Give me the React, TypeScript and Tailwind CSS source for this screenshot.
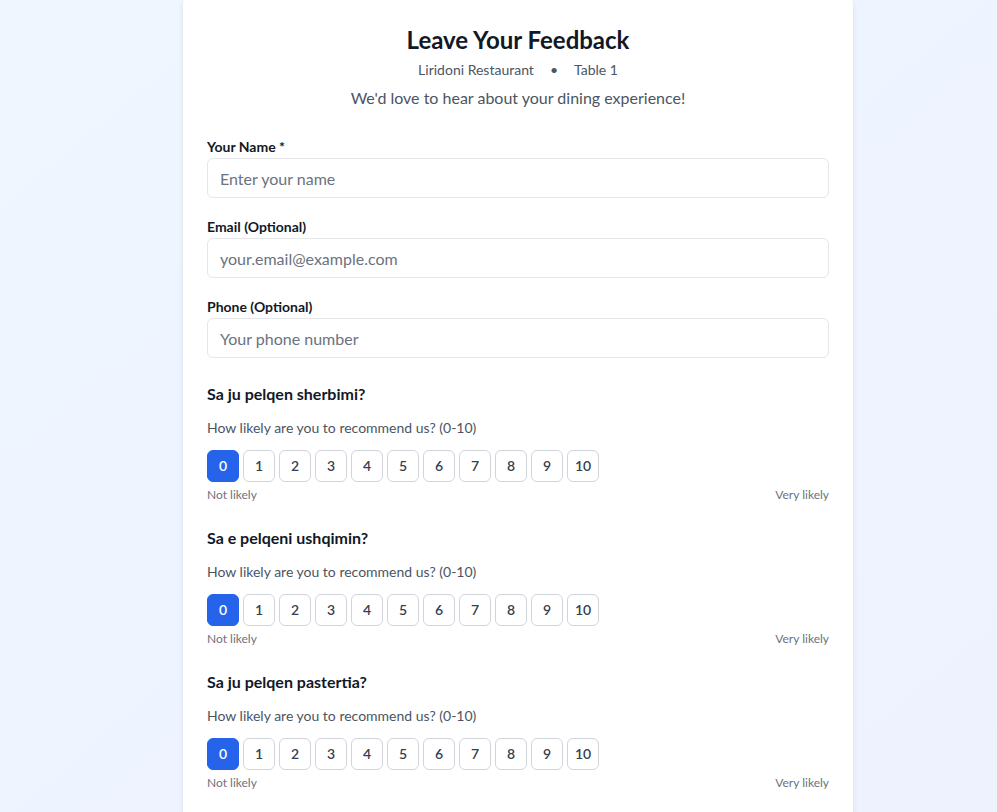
import React, { useState } from "react";

const questions = [
  "Sa ju pelqen sherbimi?",
  "Sa e pelqeni ushqimin?",
  "Sa ju pelqen pastertia?",
];

function RatingScale({ title }: { title: string }) {
  const [value, setValue] = useState(0);

  return (
    <div>
      <h3 className="text-base leading-6 font-bold text-[#111827]">{title}</h3>
      <p className="mt-3 text-sm leading-5 text-[#4b5563]">
        How likely are you to recommend us? (0-10)
      </p>
      <div className="mt-3 flex gap-1">
        {Array.from({ length: 11 }, (_, i) => (
          <button
            key={i}
            onClick={() => setValue(i)}
            className={`w-8 h-8 rounded-md text-sm font-semibold border ${
              value === i
                ? "bg-[#2563eb] border-[#2563eb] text-white"
                : "bg-white border-[#d1d5db] text-[#374151]"
            }`}
          >
            {i}
          </button>
        ))}
      </div>
      <div className="mt-[5px] flex justify-between text-xs leading-4 text-[#6b7280]">
        <span>Not likely</span>
        <span>Very likely</span>
      </div>
    </div>
  );
}

export default function App() {
  const [form, setForm] = useState({ name: "", email: "", phone: "" });

  const inputClass =
    "block w-full h-10 px-3 rounded-md border border-[#e5e7eb] bg-white text-base text-[#111827] placeholder-[#6b7280] focus:outline-none focus:ring-2 focus:ring-blue-500";

  return (
    <div
      className="min-h-screen bg-gradient-to-br from-[#eff6ff] to-[#eef2ff] overflow-hidden"
      style={{ fontFamily: 'Lato, "Noto Sans", sans-serif' }}
    >
      <div className="ml-[183px] w-[670px] -mt-2 bg-white rounded-xl shadow-md px-6 pt-8 pb-10">
        {/* Header */}
        <div className="text-center">
          <h1 className="text-2xl leading-8 font-bold text-[#111827]">
            Leave Your Feedback
          </h1>
          <div className="mt-1 text-sm leading-5 text-[#4b5563] flex justify-center gap-4">
            <span>Liridoni Restaurant</span>
            <span>•</span>
            <span>Table 1</span>
          </div>
          <p className="mt-[6px] text-base leading-6 text-[#4b5563]">
            We'd love to hear about your dining experience!
          </p>
        </div>

        {/* Contact fields */}
        <div className="mt-[27px] space-y-[19px]">
          <div>
            <label className="block text-sm leading-5 font-bold text-[#111827] mb-px">
              Your Name *
            </label>
            <input
              className={inputClass}
              placeholder="Enter your name"
              value={form.name}
              onChange={(e) => setForm({ ...form, name: e.target.value })}
            />
          </div>
          <div>
            <label className="block text-sm leading-5 font-bold text-[#111827] mb-px">
              Email (Optional)
            </label>
            <input
              className={inputClass}
              placeholder="your.email@example.com"
              value={form.email}
              onChange={(e) => setForm({ ...form, email: e.target.value })}
            />
          </div>
          <div>
            <label className="block text-sm leading-5 font-bold text-[#111827] mb-px">
              Phone (Optional)
            </label>
            <input
              className={inputClass}
              placeholder="Your phone number"
              value={form.phone}
              onChange={(e) => setForm({ ...form, phone: e.target.value })}
            />
          </div>
        </div>

        {/* Ratings */}
        <div className="mt-6 space-y-[23px]">
          {questions.map((q) => (
            <RatingScale key={q} title={q} />
          ))}
        </div>
      </div>
    </div>
  );
}
